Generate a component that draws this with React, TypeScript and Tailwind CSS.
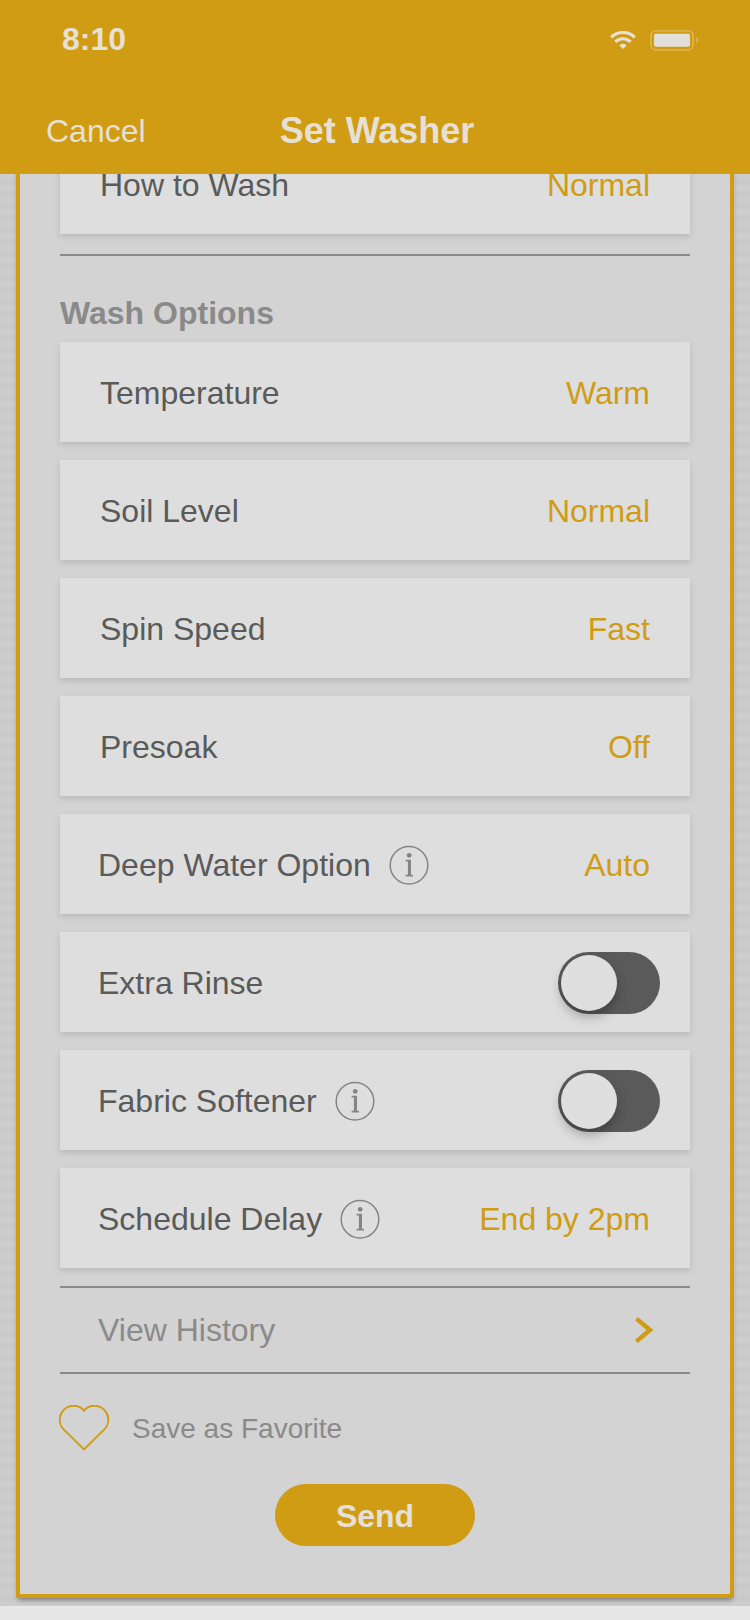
import React, { useState } from 'react';

interface OptionRowProps {
    label: string;
    value: string;
}

interface InfoRowProps {
    label: string;
    hasInfo?: boolean;
    children: React.ReactNode;
}

interface ToggleProps {
    id: string;
    checked: boolean;
    onChange: (checked: boolean) => void;
}

const washOptions: OptionRowProps[] = [
    { label: 'Temperature', value: 'Warm' },
    { label: 'Soil Level', value: 'Normal' },
    { label: 'Spin Speed', value: 'Fast' },
    { label: 'Presoak', value: 'Off' },
];

const cardStyle = 'flex h-[100px] w-full items-center justify-between bg-[#dedede] pt-0.5 text-left shadow-[0_3px_6px_rgba(0,0,0,0.12)]';

const WifiIcon = () => (
    <svg className="h-[18px] w-[26px]" viewBox="0 0 26 18" fill="none" stroke="#e6e0d6" strokeWidth="3.2">
        <path d="M1.3 6.3a16.7 16.7 0 0 1 23.4 0" />
        <path d="M5.4 10.9a10.8 10.8 0 0 1 15.2 0" />
        <path d="M13 18 9.2 14.2a5.5 5.5 0 0 1 7.6 0z" fill="#e6e0d6" stroke="none" />
    </svg>
);

const BatteryIcon = () => (
    <svg className="h-[22px] w-[50px]" viewBox="0 0 50 22" fill="none">
        <rect x="1" y="1.8" width="42" height="19" rx="4.5" stroke="#dcb24a" strokeWidth="1.8" />
        <rect x="4" y="4.8" width="36" height="13" rx="2" fill="#e2dfda" />
        <path d="M46 7.8c3 1.5 3 5.500 0 7z" fill="#dcb24a" />
    </svg>
);

const InfoIcon = () => (
    <svg className="size-10" viewBox="0 0 40 40" fill="none">
        <circle cx="20" cy="20.3" r="18.8" stroke="#858585" strokeWidth="1.5" />
        <circle cx="20.2" cy="10.3" r="2.4" fill="#858585" />
        <path d="M16.6 14.8h5.4v15h2v1.8h-7.4v-1.8h2.300V16.600h-2.300z" fill="#858585" />
    </svg>
);

const OptionRow: React.FC<OptionRowProps> = ({ label, value }) => (
    <button type="button" className={`${cardStyle} px-10`}>
        <span className="text-[#5a5a5a]">{label}</span>
        <span className="text-[#cf9c14]">{value}</span>
    </button>
);

const InfoRow: React.FC<InfoRowProps> = ({ label, hasInfo, children }) => {
    const id = label.toLowerCase().replace(/ /g, '-');

    return (
        <div className={`${cardStyle} pr-[30px] pl-[38px]`}>
            <div className="flex items-center gap-[18px]">
                <label htmlFor={id} className="text-[#5a5a5a]">{label}</label>
                {hasInfo && (
                    <button type="button" aria-label={`About ${label}`}>
                        <InfoIcon />
                    </button>
                )}
            </div>
            {children}
        </div>
    );
};

const Toggle: React.FC<ToggleProps> = ({ id, checked, onChange }) => (
    <input
        id={id}
        type="checkbox"
        role="switch"
        checked={checked}
        onChange={(e) => onChange(e.target.checked)}
        className="flex h-[62px] w-[102px] appearance-none items-center rounded-full bg-[#5a5a5a] p-[3px] before:size-14 before:rounded-full before:bg-[#dfdfdf] before:shadow-[0_6px_12px_rgba(0,0,0,0.28)] checked:justify-end checked:bg-[#cf9c14]"
    />
);

export default function App() {
    const [extraRinse, setExtraRinse] = useState(false);
    const [softener, setSoftener] = useState(false);

    return (
        <div className="flex min-h-screen flex-col bg-[#e7e7e7] font-['Liberation_Sans',Arial,sans-serif] text-[32px] leading-9">
            <header className="z-10 bg-[#cf9c14] text-[#e6e0d6]">
                <div className="flex h-20 items-center justify-between pr-[50px] pl-[62px]">
                    <span className="pb-0.5 font-bold">8:10</span>
                    <div className="flex items-center gap-[14px]">
                        <WifiIcon />
                        <BatteryIcon />
                    </div>
                </div>
                <div className="grid h-[94px] grid-cols-[1fr_auto_1fr] items-center pt-2 pr-[42px] pl-[46px]">
                    <button type="button" className="justify-self-start">Cancel</button>
                    <h1 className="text-4xl font-bold">Set Washer</h1>
                </div>
            </header>

            <main className="bg-[repeating-linear-gradient(180deg,#cdcdcd_0px,#cdcdcd_4px,#c9c9c9_6px,#c9c9c9_10px,#cdcdcd_12px)] px-4 pb-2">
                <div className="border-4 border-t-0 border-[#cf9c14] bg-[#d3d3d3] px-10 pb-12 shadow-[0_4px_5px_-2px_rgba(0,0,0,0.4)]">
                    {/* scrolled so that the first row sits partly under the header */}
                    <div className="-mt-10 border-b-2 border-[#8a8a8a] pb-5">
                        <OptionRow label="How to Wash" value="Normal" />
                    </div>

                    <h2 className="mt-[39px] mb-[11px] font-bold text-[#8a8a8a]">Wash Options</h2>

                    <div className="flex flex-col gap-[18px]">
                        {washOptions.map((option) => (
                            <OptionRow key={option.label} {...option} />
                        ))}
                        <InfoRow label="Deep Water Option" hasInfo>
                            <button id="deep-water-option" type="button" className="mr-2.5 text-[#cf9c14]">Auto</button>
                        </InfoRow>
                        <InfoRow label="Extra Rinse">
                            <Toggle id="extra-rinse" checked={extraRinse} onChange={setExtraRinse} />
                        </InfoRow>
                        <InfoRow label="Fabric Softener" hasInfo>
                            <Toggle id="fabric-softener" checked={softener} onChange={setSoftener} />
                        </InfoRow>
                        <InfoRow label="Schedule Delay" hasInfo>
                            <button id="schedule-delay" type="button" className="mr-2.5 text-[#cf9c14]">End by 2pm</button>
                        </InfoRow>
                    </div>

                    <a href="#history" className="mt-[18px] flex h-[88px] items-center justify-between border-y-2 border-[#8a8a8a] pr-9 pl-[38px] text-[#8a8a8a]">
                        View History
                        <svg className="h-7 w-5" viewBox="0 0 20 28" fill="none" stroke="#cf9c14" strokeWidth="4.5">
                            <path d="M2.4 2.6 16 14 2.4 25.4" />
                        </svg>
                    </a>

                    <button type="button" className="mt-[31px] flex items-center gap-[22px] text-[28px] text-[#8a8a8a]">
                        <svg className="-ml-px h-12 w-[51px]" viewBox="0 0 51 48" fill="none" stroke="#cf9c14" strokeWidth="2">
                            <path d="M25 44.4 4.9 24.6A13.9 13.9 0 0 1 14.700.8C19 .8 22.500 2.400 25 5.700 27.500 2.400 31 .8 35.300.8A13.900 13.900 0 0 1 45.100 24.600z" />
                        </svg>
                        Save as Favorite
                    </button>

                    <div className="mt-[31px] flex justify-center">
                        <button type="button" className="h-[62px] w-[200px] rounded-full bg-[#cf9c14] pt-0.5 font-bold text-[#e6e0d6]">Send</button>
                    </div>
                </div>
            </main>
        </div>
    );
}
